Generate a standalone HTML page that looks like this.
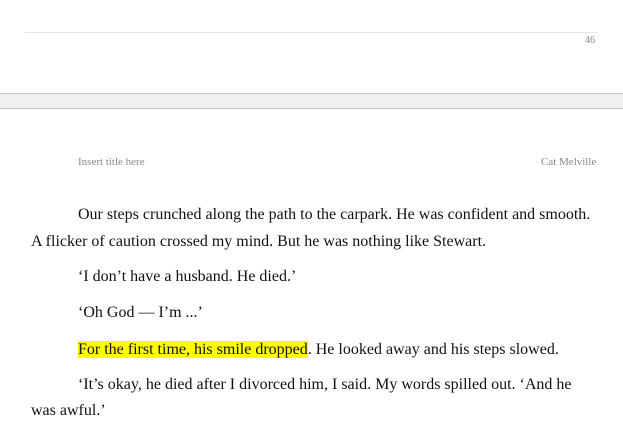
<!DOCTYPE html>
<html><head><style>
html,body{margin:0}
body{width:623px;height:432px;overflow:hidden;background:#fff;position:relative}
*{font-family:"Liberation Serif","Times New Roman",Times,"DejaVu Serif",serif}
.a{position:absolute}
.p{position:absolute;left:31px;font-size:16px;color:#111;white-space:nowrap}
</style></head><body>
<div class="a" style="left:25px;top:32px;width:572px;height:1px;background:#e6e6e6"></div>
<div class="a" style="left:585px;top:35px;font-size:10px;color:#888">46</div>
<div class="a" style="left:0;top:93px;width:623px;height:14px;background:#f0f0f0;border-top:1px solid #c4c4c4;border-bottom:1px solid #c4c4c4"></div>
<div class="a" style="left:78px;top:156px;font-size:11px;color:#888">Insert title here</div>
<div class="a" style="left:541px;top:156px;font-size:11px;color:#888">Cat Melville</div>
<div class="p" style="top:206px;left:78px">Our steps crunched along the path to the carpark. He was confident and smooth.</div>
<div class="p" style="top:233px">A flicker of caution crossed my mind. But he was nothing like Stewart.</div>
<div class="p" style="top:268px;left:78px">‘I don’t have a husband. He died.’</div>
<div class="p" style="top:304px;left:78px">‘Oh God — I’m ...’</div>
<div class="p" style="top:341px;left:78px"><span style="background:#ffff00">For the first time, his smile dropped</span>. He looked away and his steps slowed.</div>
<div class="p" style="top:376px;left:78px">‘It’s okay, he died after I divorced him, I said. My words spilled out. ‘And he</div>
<div class="p" style="top:402px">was awful.’</div>
</body></html>
